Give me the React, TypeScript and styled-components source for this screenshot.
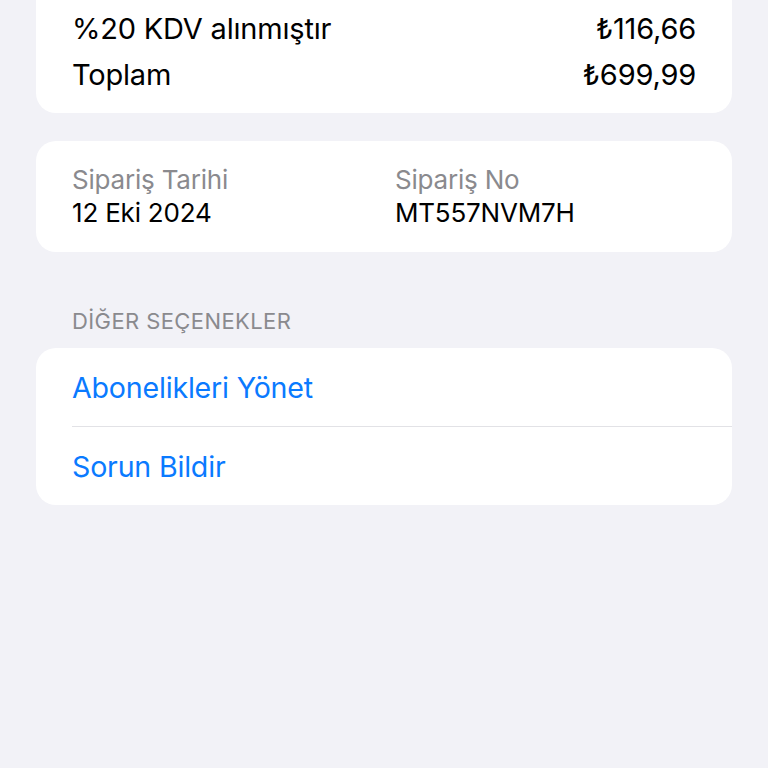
import React from "react";
import styled, { createGlobalStyle } from "styled-components";

const Global = createGlobalStyle`
  html, body { margin: 0; padding: 0; background: #f2f2f7; }
  body { font-family: Inter, "Noto Sans", "Liberation Sans", sans-serif; -webkit-font-smoothing: antialiased; }
  #root { min-height: 768px; overflow: hidden; }
`;

const Page = styled.div`
  padding: 0 36px 40px;
  display: flex;
  flex-direction: column;
  color: #000;
`;

const Card = styled.div<{ $gap?: number }>`
  background: #fff;
  border-radius: 20px;
  margin-top: ${(p) => p.$gap ?? 0}px;
`;

const ScrolledCard = styled(Card)`
  margin-top: -34px;
  padding: 40px 36px 15px;
  display: flex;
  flex-direction: column;
`;

const SumRow = styled.div`
  display: flex;
  justify-content: space-between;
  font-size: 29px;
  line-height: 46px;
  letter-spacing: -0.2px;
`;

const InfoCard = styled(Card)`
  display: grid;
  grid-template-columns: 323px 1fr;
  padding: 22px 36px 23px;
`;

const InfoCol = styled.div`
  display: flex;
  flex-direction: column;
`;

const Label = styled.div<{ $muted?: boolean }>`
  font-size: 26px;
  line-height: 33px;
  color: ${(p) => (p.$muted ? "#8a8a8e" : "#000")};
  letter-spacing: -0.2px;
`;

const SectionHeader = styled.div`
  margin-top: 55px;
  padding: 0 36px;
  font-size: 22px;
  line-height: 28px;
  color: #8a8a8e;
  letter-spacing: 0.4px;
`;

const OptionsCard = styled(Card)`
  margin-top: 13px;
  display: flex;
  flex-direction: column;
`;

const Option = styled.div<{ $divider?: boolean }>`
  margin-left: 36px;
  height: 78px;
  display: flex;
  align-items: center;
  font-size: 28.6px;
  color: #0a7aff;
  letter-spacing: -0.2px;
  border-top: ${(p) => (p.$divider ? "1px solid #e2e2e6" : "none")};
`;

export default function App() {
  return (
    <>
      <Global />
      <Page>
        <ScrolledCard>
          <SumRow>
            <span>%20 KDV alınmıştır</span>
            <span>₺116,66</span>
          </SumRow>
          <SumRow>
            <span>Toplam</span>
            <span>₺699,99</span>
          </SumRow>
        </ScrolledCard>
        <InfoCard $gap={28}>
          <InfoCol>
            <Label $muted>Sipariş Tarihi</Label>
            <Label>12 Eki 2024</Label>
          </InfoCol>
          <InfoCol>
            <Label $muted>Sipariş No</Label>
            <Label>MT557NVM7H</Label>
          </InfoCol>
        </InfoCard>
        <SectionHeader>DİĞER SEÇENEKLER</SectionHeader>
        <OptionsCard>
          <Option>Abonelikleri Yönet</Option>
          <Option $divider>Sorun Bildir</Option>
        </OptionsCard>
      </Page>
    </>
  );
}
